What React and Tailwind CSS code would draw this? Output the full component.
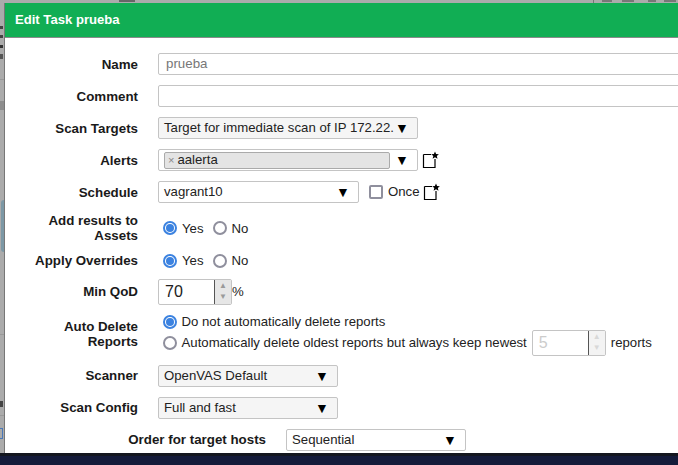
const Arrow = () => <span className="w-[12px] text-center text-[14px] leading-none text-black">▼</span>;

const NewIcon = () => (
  <svg width="18" height="18" viewBox="0 0 18 18" className="shrink-0">
    <path d="M1.5 3.5H9M13 8V16.5H1.5V3.5" fill="none" stroke="#000" strokeWidth="1.2" />
    <path d="M13 0.5l1.1 2.6 2.8.2-2.1 1.8.7 2.7-2.5-1.5-2.4 1.5.7-2.7-2.1-1.8 2.7-.2z" fill="#000" />
  </svg>
);

const Label = ({ children, className = '' }) => (
  <div className={`w-[133px] shrink-0 text-right font-bold text-[13.33px] text-[#1a1a1a] leading-[15px] ${className}`}>{children}</div>
);

const Select = ({ children, width, bg = 'bg-[#f5f5f5]' }) => (
  <div className={`h-[22px] ${width} ${bg} pr-[10px] flex items-center justify-between pl-[5px] border border-[#c4c4c4] rounded-[2px] text-[#222]`}>
    <span>{children}</span>
    <Arrow />
  </div>
);

const Radio = ({ on }) => (
  <span className={`w-[14px] h-[14px] rounded-full border-2 shrink-0 flex items-center justify-center bg-white ${on ? 'border-[#3b82e0]' : 'border-[#8f8f9d]'}`}>
    {on && <span className="w-[8px] h-[8px] rounded-full bg-[#3b82e0]" />}
  </span>
);

const YesNo = () => (
  <div className="flex items-center pl-[5px] text-[#222]">
    <Radio on />
    <span className="ml-[5px]">Yes</span>
    <span className="ml-[9px]"><Radio /></span>
    <span className="ml-[5px]">No</span>
  </div>
);

const Spinner = ({ disabled }) => (
  <div className={`w-[17px] h-full border-l flex flex-col items-center justify-center gap-[3px] text-[8px] leading-[8px] border-[#555] ${disabled ? 'bg-[#f3f3f3] text-[#d8d8d8]' : 'bg-[#e6e6e6] text-[#9a9a9a]'}`}>
    <span>▲</span>
    <span>▼</span>
  </div>
);

export default function App() {
  return (
    <div className="relative w-[678px] h-[465px] overflow-hidden bg-[#ababab] text-[13.2px] text-[#222]" style={{ fontFamily: '"Liberation Sans", Arial, sans-serif' }}>
      {/* scraps of the page behind the dialog */}
      <div className="absolute left-0 top-[26px] w-[3px] h-[3px] bg-[#444]" />
      <div className="absolute left-0 top-[35px] w-[3px] h-[3px] bg-[#444]" />
      <div className="absolute left-0 top-[45px] w-[3px] h-[3px] bg-[#333]" />
      <div className="absolute left-0 top-[54px] w-[3px] h-[5px] bg-[#555]" />
      <div className="absolute left-0 top-[79px] w-[4px] h-[1px] bg-[#999]" />
      <div className="absolute left-0 top-[101px] w-[4px] h-[9px] bg-[#8d8d8d]" />
      <div className="absolute left-[1px] top-[200px] w-[3px] h-[52px] rounded-l-full bg-[#7c98a5]" />
      <div className="absolute left-0 top-[334px] w-[4px] h-[1px] bg-[#999]" />
      <div className="absolute left-0 top-[401px] w-[3px] h-[6px] bg-[#444]" />
      <div className="absolute left-0 top-[415px] w-[4px] h-[1px] bg-[#999]" />
      <div className="absolute left-0 top-[428px] w-[3px] h-[11px] border-y border-r border-[#4a78b8]" />
      <div className="absolute left-[119px] top-0 w-[16px] h-[2px] bg-[#666]" />
      <div className="absolute left-[593px] top-0 w-[1px] h-[3px] bg-[#777]" />
      <div className="absolute left-[602px] top-0 w-[10px] h-[2px] bg-[#777]" />
      <div className="absolute left-[622px] top-0 w-[12px] h-[2px] bg-[#777]" />
      <div className="absolute left-[648px] top-0 w-[8px] h-[2px] bg-[#777]" />
      <div className="absolute left-[664px] top-0 w-[12px] h-[2px] bg-[#777]" />

      {/* dialog */}
      <div className="absolute left-[4px] top-[3px] w-[720px] h-[450px] bg-white border-l border-[#777]">
        <div className="h-[35px] bg-[#11ae54] border-b border-[#8a8a8a] flex items-center pl-[10px] font-bold text-[13.1px] text-white">
          Edit Task prueba
        </div>
        <div className="pt-[15px] flex flex-col">
          <div className="flex items-center gap-[20px]">
            <Label>Name</Label>
            <div className="w-[600px] h-[22px] pl-[7px] flex items-center border border-[#c4c4c4] rounded-[2px] text-[13.33px] text-[#777]">prueba</div>
          </div>
          <div className="mt-[10px] flex items-center gap-[20px]">
            <Label>Comment</Label>
            <div className="w-[600px] h-[22px] border border-[#c4c4c4] rounded-[2px]" />
          </div>
          <div className="mt-[10px] flex items-center gap-[20px]">
            <Label>Scan Targets</Label>
            <Select width="w-[260px]">Target for immediate scan of IP 172.22.</Select>
          </div>
          <div className="mt-[10px] flex items-center gap-[20px]">
            <Label>Alerts</Label>
            <div className="w-[260px] h-[22px] pl-[5px] pr-[10px] flex items-center justify-between border border-[#c4c4c4] rounded-[2px] bg-white">
              <div className="w-[226px] h-[17px] flex items-center pl-[3px] bg-[#e4e4e4] border border-[#aaa] rounded-[2px]">
                <span className="text-[11px] text-[#888] mr-[3px]">×</span>
                <span>aalerta</span>
              </div>
              <Arrow />
            </div>
            <span className="-ml-[16px]"><NewIcon /></span>
          </div>
          <div className="mt-[10px] flex items-center gap-[20px]">
            <Label>Schedule</Label>
            <div className="flex items-center">
              <Select width="w-[201px]" bg="bg-white">vagrant10</Select>
              <span className="ml-[10px] w-[14px] h-[14px] border-2 border-[#8f8f9d] rounded-[2px] bg-white" />
              <span className="ml-[5px]">Once</span>
              <span className="ml-[3px]"><NewIcon /></span>
            </div>
          </div>
          <div className="mt-[10px] flex items-center gap-[20px]">
            <Label>Add results to Assets</Label>
            <div className="pt-[1px]"><YesNo /></div>
          </div>
          <div className="mt-[8px] flex items-center gap-[20px]">
            <Label>Apply Overrides</Label>
            <YesNo />
          </div>
          <div className="mt-[8px] flex items-center gap-[20px]">
            <Label>Min QoD</Label>
            <div className="flex items-center">
              <div className="w-[74px] h-[26px] flex items-center justify-between pl-[6px] border border-[#c4c4c4] rounded-[2px] text-[16px] overflow-hidden">
                70
                <Spinner />
              </div>
              <span className="ml-0">%</span>
            </div>
          </div>
          <div className="mt-[8px] flex items-start gap-[20px]">
            <Label className="pt-[6px]">Auto Delete<br />Reports</Label>
            <div className="flex flex-col">
              <div className="flex items-center pl-[5px] h-[18px]">
                <Radio on />
                <span className="ml-[4.5px]">Do not automatically delete reports</span>
              </div>
              <div className="flex items-center pl-[5px] mt-[-1px] h-[26px]">
                <Radio />
                <span className="ml-[4.5px]">Automatically delete oldest reports but always keep newest</span>
                <div className="ml-[5px] w-[74px] h-[26px] flex items-center justify-between pl-[6px] border border-[#c4c4c4] rounded-[2px] text-[16px] text-[#ccc] overflow-hidden">
                  5
                  <Spinner disabled />
                </div>
                <span className="ml-[5px]">reports</span>
              </div>
            </div>
          </div>
          <div className="mt-[9px] flex items-center gap-[20px]">
            <Label>Scanner</Label>
            <Select width="w-[180px]">OpenVAS Default</Select>
          </div>
          <div className="mt-[10px] flex items-center gap-[20px]">
            <Label>Scan Config</Label>
            <Select width="w-[180px]">Full and fast</Select>
          </div>
          <div className="mt-[10px] flex items-center gap-[20px]">
            <div className="w-[261px] shrink-0 text-right font-bold text-[13.33px] text-[#1a1a1a]">Order for target hosts</div>
            <Select width="w-[180px]" bg="bg-white">Sequential</Select>
          </div>
        </div>
      </div>

      {/* taskbar */}
      <div className="absolute left-0 right-0 bottom-0 h-[12px] bg-[#141b3a] border-t-[3px] border-[#14171f]" />
    </div>
  );
}
